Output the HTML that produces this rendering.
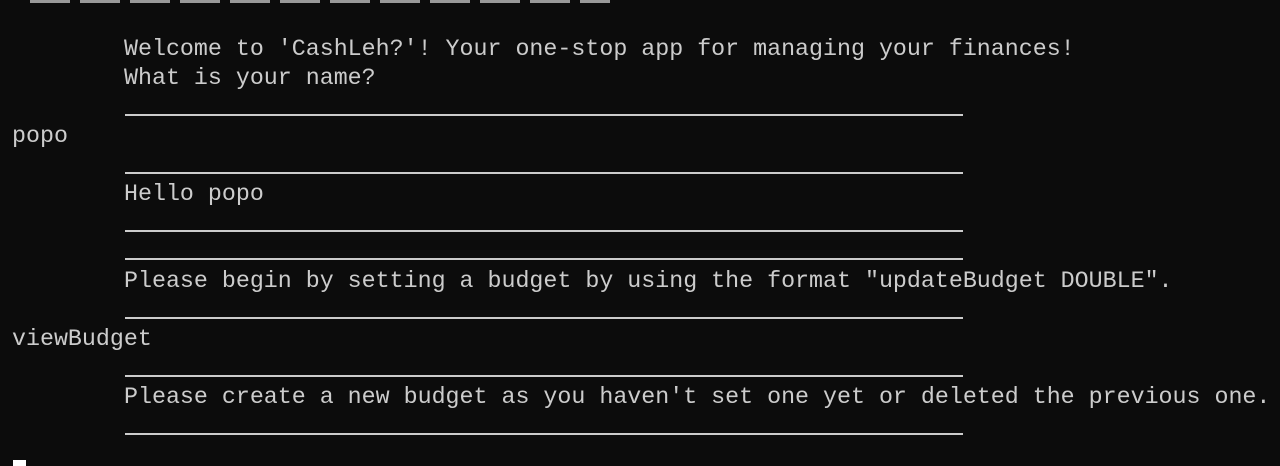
<!DOCTYPE html><html><head><style>
body{margin:0;width:1280px;height:466px;background:#0c0c0c;overflow:hidden;position:relative;font-family:"Liberation Mono",monospace;font-size:23.3px;color:#cccccc}
.t{position:absolute;height:29px;line-height:29px;white-space:pre}
.l{position:absolute;left:125px;width:838px;height:2px;background:#cccccc}
</style></head><body>
<div style="position:absolute;left:30px;top:0;width:580px;height:3px;background:repeating-linear-gradient(90deg,#999 0 40px,transparent 40px 50px)"></div>
<div class="t" style="left:124px;top:35px">Welcome to 'CashLeh?'! Your one-stop app for managing your finances!</div>
<div class="t" style="left:124px;top:64px">What is your name?</div>
<div class="l" style="top:114px"></div>
<div class="t" style="left:12px;top:122px">popo</div>
<div class="l" style="top:172px"></div>
<div class="t" style="left:124px;top:180px">Hello popo</div>
<div class="l" style="top:230px"></div>
<div class="l" style="top:258px"></div>
<div class="t" style="left:124px;top:267px">Please begin by setting a budget by using the format "updateBudget DOUBLE".</div>
<div class="l" style="top:317px"></div>
<div class="t" style="left:12px;top:325px">viewBudget</div>
<div class="l" style="top:375px"></div>
<div class="t" style="left:124px;top:383px">Please create a new budget as you haven't set one yet or deleted the previous one.</div>
<div class="l" style="top:433px"></div>
<div style="position:absolute;left:13px;top:460px;width:13px;height:6px;background:#fff"></div>
</body></html>
